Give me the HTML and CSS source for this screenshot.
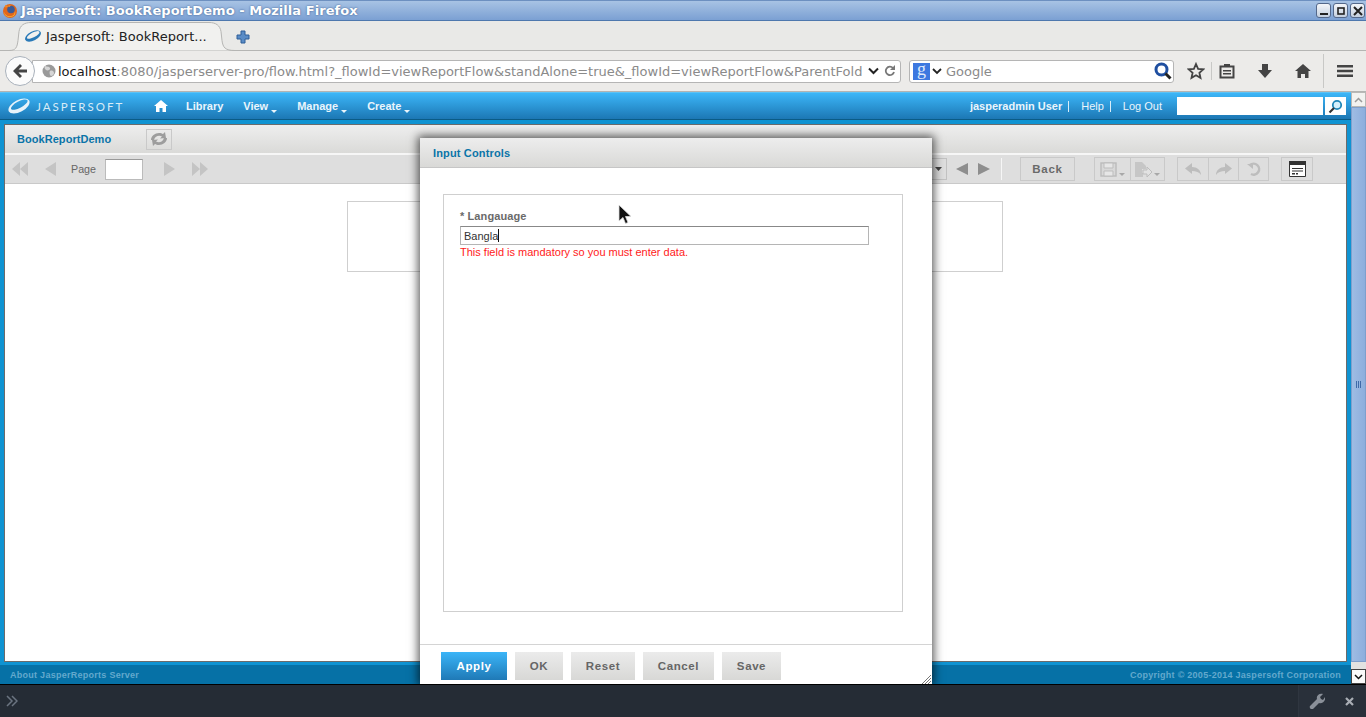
FILE: index.html
```html
<!DOCTYPE html>
<html lang="en">
<head>
  <meta charset="UTF-8" />
  <title>Jaspersoft: BookReportDemo - Mozilla Firefox</title>
  <link rel="stylesheet" href="styles.css">
</head>
<body>
<div class="screen">

  <!-- window title -->
  <div class="titlebar">
    <svg class="ff-icon" width="16" height="16" viewBox="0 0 16 16"><circle cx="8" cy="8" r="7" fill="#e2661a"/><circle cx="9" cy="6.500" r="3.800" fill="#3c5a94"/><path d="M2 9c1 3 4 5 7 4 2 0 4-2 4-5 1 3-1 6-5 6-3 0-6-2-6-5z" fill="#f3b13b"/><path d="M3 2c0 1 0 2 1 3 1-2 3-3 5-3-1 1-1 2-1 2z" fill="#f08a24"/></svg>
    <span class="title-text">Jaspersoft: BookReportDemo - Mozilla Firefox</span>
    <div class="win-btns">
      <span class="win-btn"><svg width="10" height="10" viewBox="0 0 10 10"><rect x="1" y="7" width="8" height="2" fill="#222"/></svg></span>
      <span class="win-btn"><svg width="10" height="10" viewBox="0 0 10 10"><rect x="2" y="2" width="6" height="6" fill="none" stroke="#222" stroke-width="1.6"/></svg></span>
      <span class="win-btn"><svg width="10" height="10" viewBox="0 0 10 10"><path d="M1 1l8 8M9 1l-8 8" stroke="#222" stroke-width="2"/></svg></span>
    </div>
  </div>

  <!-- tabs -->
  <div class="tabstrip">
    <div class="tab">
      <svg class="tab-shape" width="226" height="30" viewBox="0 0 226 30"><path d="M0 29.5c7 0 8-3 9-10l1-9c1-6 5-9 12-9h178c7 0 11 3 12 9l1 9c1 7 3 10 13 10" fill="#f1f1ef" stroke="#b5b5b3"/></svg>
      <svg class="jr-tab" width="18" height="16" viewBox="0 0 26 20"><g transform="rotate(-28 13 10)"><path fill-rule="evenodd" d="M.5 10a12.500 6.500 0 1 0 25 0a12.500 6.500 0 1 0-25 0zM4 8.800a10 3.500 0 1 0 20 0a10 3.500 0 1 0-20 0z" fill="#2a7ab8"/></g></svg>
      <span class="tab-label">Jaspersoft: BookReport...</span>
    </div>
    <svg class="new-tab" width="14" height="14" viewBox="0 0 14 14"><path d="M5 1h4v4h4v4H9v4H5V9H1V5h4z" fill="#5a8cc6" stroke="#2f5f98"/></svg>
  </div>

  <!-- navigation -->
  <div class="navbar">
    <div class="back-btn">
      <svg width="18" height="16" viewBox="0 0 18 16"><path d="M9 1L2 8l7 7 2-2-3.500-3.500H16v-3H7.500L11 3z" fill="#444"/></svg>
    </div>
    <div class="urlbar">
      <svg class="globe" width="14" height="14" viewBox="0 0 14 14"><circle cx="7" cy="7" r="6.500" fill="#9a9a9a"/><path d="M3 2c2 1 4 0 5 2S5 7 4 6 2 4 3 2zm5 5c2-1 4 0 4 2s-2 3-3 3-2-4-1-5z" fill="#d6d6d6"/></svg>
      <span class="url-text"><b>localhost</b>:8080/jasperserver-pro/flow.html?_flowId=viewReportFlow&amp;standAlone=true&amp;_flowId=viewReportFlow&amp;ParentFold</span>
      <svg class="url-chev" width="11" height="8" viewBox="0 0 11 8"><path d="M1 1.500l4.500 4.500L10 1.500" fill="none" stroke="#222" stroke-width="2"/></svg>
      <svg class="url-reload" width="12" height="12" viewBox="0 0 12 12"><path d="M10 7a4.200 4.200 0 1 1-1-4" fill="none" stroke="#777" stroke-width="1.800"/><path d="M11 0v5H6z" fill="#777"/></svg>
    </div>
    <div class="searchbar">
      <span class="g-badge">g</span>
      <svg class="search-chev" width="10" height="7" viewBox="0 0 10 7"><path d="M1 1l4 4 4-4" fill="none" stroke="#222" stroke-width="1.800"/></svg>
      <span class="search-hint">Google</span>
      <svg class="search-go" width="18" height="18" viewBox="0 0 18 18"><circle cx="7.500" cy="7.500" r="5.500" fill="#fff" stroke="#1f4fa0" stroke-width="3"/><path d="M11.500 11.500l5 5" stroke="#222" stroke-width="3"/></svg>
    </div>
    <div class="nav-icons">
      <svg class="nav-star" width="18" height="18" viewBox="0 0 18 18"><path d="M9 2l2.100 4.800 5.200.5-3.900 3.500 1.100 5.100L9 13.300l-4.500 2.600 1.100-5.100-3.900-3.500 5.200-.5z" fill="none" stroke="#444" stroke-width="1.800"/></svg>
      <span class="nav-sep"></span>
      <svg class="nav-clip" width="16" height="16" viewBox="0 0 16 16"><path d="M1.500 3.500h13v11h-13z" fill="none" stroke="#444" stroke-width="2"/><path d="M5 1h6v3H5zM4 7h8v1.500H4zm0 3h8v1.500H4z" fill="#444"/></svg>
      <svg class="nav-down" width="16" height="16" viewBox="0 0 16 16"><path d="M5 1h6v6h4l-7 8-7-8h4z" fill="#444"/></svg>
      <svg class="nav-home" width="18" height="16" viewBox="0 0 18 16"><path d="M9 1L1 8h2.500v7H7v-4h4v4h3.500V8H17z" fill="#444"/></svg>
      <span class="nav-sep nav-sep-tall"></span>
      <svg class="nav-menu" width="18" height="14" viewBox="0 0 18 14"><path d="M1 1h16v2.500H1zm0 4.800h16v2.500H1zm0 4.800h16v2.500H1z" fill="#444"/></svg>
    </div>
  </div>

  <!-- browser content -->
  <div class="viewport">
    <div class="page">

      <div class="js-header">
        <div class="js-logo">
          <svg width="24" height="20" viewBox="0 0 26 20"><g transform="rotate(-28 13 10)"><path fill-rule="evenodd" d="M.5 10a12.500 6.500 0 1 0 25 0a12.500 6.500 0 1 0-25 0zM4 8.800a10 3.500 0 1 0 20 0a10 3.500 0 1 0-20 0z" fill="#e8f3fa"/></g></svg>
          <span class="js-word">JASPERSOFT</span>
        </div>
        <svg class="js-home" width="14" height="12" viewBox="0 0 14 12"><path d="M7 0L0 6h2v6h3.500V8h3v4H12V6h2z" fill="#fff"/></svg>
        <a class="js-link js-library" href="#">Library</a>
        <a class="js-link js-menu" href="#">View</a>
        <a class="js-link js-menu" href="#">Manage</a>
        <a class="js-link js-menu" href="#">Create</a>
        <div class="js-right">
          <span class="js-user">jasperadmin User</span>
          <a class="js-link js-sep" href="#">Help</a>
          <a class="js-link" href="#">Log Out</a>
          <div class="js-search">
            <span class="js-search-box"></span>
            <span class="js-search-btn">
              <svg width="15" height="15" viewBox="0 0 15 15"><circle cx="9" cy="6" r="4.200" fill="#d6f0fb" stroke="#1f86b8" stroke-width="1.800"/><path d="M6 9l-4.500 4.500" stroke="#333" stroke-width="2.200"/></svg>
            </span>
          </div>
        </div>
      </div>

      <div class="work">
        <div class="panel">
          <div class="panel-head">
            <span class="report-name">BookReportDemo</span>
            <span class="sync-btn">
              <svg width="20" height="14" viewBox="0 0 20 14"><path d="M2 8c0-4 4-7 8-7 2 0 3 .5 4 1l2-2 1 6-6 .5 2-2c-3-1.500-7-.5-8 3.500zM18 6c0 4-4 7-8 7-2 0-3-.5-4-1l-2 2-1-6 6-.5-2 2c3 1.500 7 .5 8-3.500z" fill="#9d9d9d"/></svg>
            </span>
          </div>
          <div class="toolbar">
            <svg class="tb-first" width="16" height="14" viewBox="0 0 16 14"><path d="M8 0v14L0 7zm8 0v14L8 7z" fill="#c4c4c4"/></svg>
            <svg class="tb-prev" width="12" height="14" viewBox="0 0 12 14"><path d="M11 0v14L0 7z" fill="#c4c4c4"/></svg>
            <span class="page-label">Page</span>
            <span class="page-input"></span>
            <svg class="tb-next" width="12" height="14" viewBox="0 0 12 14"><path d="M1 0v14l11-7z" fill="#c4c4c4"/></svg>
            <svg class="tb-last" width="16" height="14" viewBox="0 0 16 14"><path d="M0 0v14l8-7zm8 0v14l8-7z" fill="#c4c4c4"/></svg>

            <div class="tb-right">
              <span class="zoom-select"><svg width="7" height="4" viewBox="0 0 7 4"><path d="M0 0h7L3.500 4z" fill="#444"/></svg></span>
              <svg class="tb-search-prev" width="12" height="14" viewBox="0 0 12 14"><path d="M12 1v12L0 7z" fill="#8e8e8e"/></svg>
              <svg class="tb-search-next" width="12" height="14" viewBox="0 0 12 14"><path d="M0 1v12l12-6z" fill="#8e8e8e"/></svg>
              <span class="tb-divider"></span>
              <span class="back-report">Back</span>
              <div class="tb-group tb-group-save">
                <span class="tb-cell tb-cell-save">
                  <svg width="17" height="15" viewBox="0 0 17 15"><path d="M1 1h15v13H1z" fill="#d8d8d8" stroke="#bdbdbd" stroke-width="1.500"/><path d="M4 1h9v5H4zM4 9h9v5H4z" fill="#e6e6e6" stroke="#bdbdbd"/></svg>
                  <i class="caret"></i>
                </span>
                <span class="tb-cell tb-cell-save">
                  <svg width="18" height="17" viewBox="0 0 18 17"><path d="M1 1h7l4 4v3H8v4h1v4H1z" fill="#c6c6c6"/><path d="M9 9h4V6l5 5-5 5v-3H9z" fill="#e2e2e2" stroke="#bdbdbd"/></svg>
                  <i class="caret"></i>
                </span>
              </div>
              <div class="tb-group tb-group-undo">
                <span class="tb-cell"><svg width="18" height="14" viewBox="0 0 18 14"><path d="M8 1L1 6.500 8 12V9c4 0 7 1 9 4 0-5-4-8-9-8z" fill="#bdbdbd"/></svg></span>
                <span class="tb-cell"><svg width="18" height="14" viewBox="0 0 18 14"><path d="M10 1l7 5.500-7 5.500V9c-4 0-7 1-9 4 0-5 4-8 9-8z" fill="#bdbdbd"/></svg></span>
                <span class="tb-cell"><svg width="16" height="16" viewBox="0 0 16 16"><path d="M5 13a5.500 5.500 0 1 0-1-9" fill="none" stroke="#bdbdbd" stroke-width="2.500"/><path d="M1 3h6v5z" fill="#bdbdbd"/></svg></span>
              </div>
              <div class="tb-group tb-group-ic">
                <span class="tb-cell">
                  <svg width="17" height="16" viewBox="0 0 17 16"><path d="M.5.5h16v15H.5z" fill="#fff" stroke="#333"/><path d="M0 0h17v4H0zM3 7h11v1H3zm0 2.500h11v1H3zM3 12h3v1.500H3zm4 0h2v1.500H7z" fill="#333"/></svg>
                </span>
              </div>
            </div>
          </div>
          <div class="report-area">
            <div class="report-sheet"></div>
          </div>
        </div>
      </div>

      <div class="js-footer">
        <span>About JasperReports Server</span>
        <span>Copyright © 2005-2014 Jaspersoft Corporation</span>
      </div>
    </div>

    <div class="scrollbar">
      <span class="sb-arrow"><svg width="9" height="6" viewBox="0 0 9 6"><path d="M1 5l3.500-3.500L8 5" fill="none" stroke="#999" stroke-width="1.500"/></svg></span>
      <span class="sb-thumb"><i class="sb-grip"></i></span>
      <span class="sb-arrow sb-arrow-down"><svg width="9" height="6" viewBox="0 0 9 6"><path d="M1 1l3.500 3.500L8 1" fill="none" stroke="#111" stroke-width="1.500"/></svg></span>
    </div>

    <!-- dialog over the report -->
    <div class="dialog">
      <div class="dialog-head">Input Controls</div>
      <div class="dialog-body">
        <div class="controls-box">
          <label class="field-label">* Langauage</label>
          <div class="field-input"><span>Bangla</span><i class="text-caret"></i></div>
          <div class="field-error">This field is mandatory so you must enter data.</div>
        </div>
      </div>
      <div class="dialog-foot">
        <button class="btn btn-primary">Apply</button>
        <button class="btn btn-ok">OK</button>
        <button class="btn btn-reset">Reset</button>
        <button class="btn btn-cancel">Cancel</button>
        <button class="btn btn-save">Save</button>
      </div>
      <svg class="resize-grip" width="10" height="10" viewBox="0 0 10 10"><path d="M10 1L1 10M10 4l-6 6M10 7l-3 3" stroke="#777" stroke-width="1"/></svg>
    </div>

    <svg class="cursor" width="14" height="22" viewBox="0 0 14 22"><path d="M1 1v16l4-3.500 2.500 6 2.500-1-2.500-6H13z" fill="#111" stroke="#ddd" stroke-width=".8"/></svg>
  </div>

  <!-- dev toolbar -->
  <div class="devbar">
    <svg class="dev-chev" width="12" height="12" viewBox="0 0 12 12"><path d="M1 1l5 5-5 5M6 1l5 5-5 5" fill="none" stroke="#6b7480" stroke-width="1.500"/></svg>
    <div class="dev-tools">
      <svg width="16" height="16" viewBox="0 0 16 16"><path d="M1 13l7-7c-1-3 2-6 6-5l-3 3 1 2 2 1 2-3c1 4-3 7-6 6l-6 6c-2 1-4-1-3-3z" fill="#8a9099"/></svg>
      <svg class="dev-close" width="9" height="9" viewBox="0 0 9 9"><path d="M1 1l7 7M8 1L1 8" stroke="#a9aeb5" stroke-width="2.200"/></svg>
    </div>
  </div>
</div>
</body>
</html>
```

FILE: styles.css
```css
* {
  box-sizing: border-box;
}

html, body {
  margin: 0;
  padding: 0;
  height: 717px;
  overflow: hidden;
}

body {
  font-family: "Liberation Sans", Arial, sans-serif;
}

.screen {
  display: flex;
  flex-direction: column;
  width: 1366px;
  height: 717px;
}

/* window title */
.titlebar {
  display: flex;
  align-items: center;
  height: 21px;
  padding: 0 2px;
  background: linear-gradient(#a8c3e4, #7ba0d3);
  border-top: 1px solid #6d90c0;
  border-bottom: 1px solid #4e78ae;
}

.ff-icon {
  flex: none;
}

.title-text {
  margin-left: 3px;
  font: bold 13px "DejaVu Sans", sans-serif;
  letter-spacing: 0.05px;
  color: #fff;
  text-shadow: 0 0 2px #34568a;
}

.win-btns {
  display: flex;
  gap: 2px;
  margin-left: auto;
  margin-right: -1px;
}

.win-btn {
  display: flex;
  align-items: center;
  justify-content: center;
  width: 15px;
  height: 15px;
  background: linear-gradient(#f4f6f9, #c3cfdf);
  border: 1px solid #54688a;
  border-radius: 3px;
}

/* tabs */
.tabstrip {
  display: flex;
  align-items: flex-end;
  height: 30px;
  background: #e9e9e7;
  border-bottom: 1px solid #b5b5b3;
  padding-left: 9px;
}

.tab {
  position: relative;
  display: flex;
  align-items: center;
  width: 226px;
  height: 30px;
  margin-bottom: -1px;
  padding-left: 15px;
}

.tab-shape {
  position: absolute;
  left: 0;
  top: 0;
}

.jr-tab {
  position: relative;
}

.tab-label {
  position: relative;
  margin-left: 4px;
  font: 13px "DejaVu Sans", sans-serif;
  color: #222;
}

.new-tab {
  margin: 0 0 6px 1px;
}

/* navigation */
.navbar {
  display: flex;
  align-items: center;
  height: 41px;
  padding-left: 5px;
  background: #ecebe9;
  border-bottom: 1px solid #b4b4b2;
}

.back-btn {
  position: relative;
  z-index: 1;
  display: flex;
  align-items: center;
  justify-content: center;
  width: 30px;
  height: 30px;
  background: #fbfbfb;
  border: 1px solid #a9b1bb;
  border-radius: 50%;
}

.urlbar {
  display: flex;
  align-items: center;
  width: 869px;
  height: 23px;
  margin-left: -3px;
  padding: 0 4px 0 9px;
  background: #fff;
  border: 1px solid #b5b5b5;
  border-radius: 0 3px 3px 0;
}

.globe {
  flex: none;
}

.url-text {
  flex: 1;
  margin-left: 2px;
  white-space: nowrap;
  font: 13px "DejaVu Sans", sans-serif;
  color: #8a8a8a;
}

.url-text b {
  font-weight: normal;
  color: #1a1a1a;
}

.url-chev {
  flex: none;
  margin-left: 4px;
}

.url-reload {
  flex: none;
  margin-left: 5px;
}

.searchbar {
  display: flex;
  align-items: center;
  width: 265px;
  height: 23px;
  margin-left: 8px;
  padding: 0 1px 0 3px;
  background: #fff;
  border: 1px solid #b5b5b5;
  border-radius: 3px;
}

.g-badge {
  width: 17px;
  height: 17px;
  background: #3d78e0;
  color: #dfe9fb;
  font: 18px/13px "Liberation Serif", serif;
  text-align: center;
}

.search-chev {
  margin-left: 2px;
}

.search-hint {
  margin-left: 4px;
  font: 13px "DejaVu Sans", sans-serif;
  color: #8a8a8a;
}

.search-go {
  margin-left: auto;
}

.nav-icons {
  display: flex;
  align-items: center;
  flex: 1;
  height: 34px;
}

.nav-star {
  margin-left: 13px;
}

.nav-sep {
  width: 1px;
  height: 18px;
  margin-left: 6px;
  background: #c8c8c6;
}

.nav-sep-tall {
  height: 34px;
  margin-left: 11px;
}

.nav-clip {
  margin-left: 7px;
}

.nav-down {
  margin-left: 22px;
}

.nav-home {
  margin-left: 21px;
}

.nav-menu {
  margin-left: 12px;
}

/* browser content */
.viewport {
  position: relative;
  flex: 1;
  display: flex;
  min-height: 0;
}

.page {
  flex: 1;
  display: flex;
  flex-direction: column;
  min-width: 0;
}

.js-header {
  display: flex;
  align-items: center;
  height: 28px;
  padding-left: 7px;
  background: linear-gradient(#3cb6f8, #1c77b4);
  border-top: 1px solid #5dc2f5;
  border-bottom: 1px solid #0a5b86;
}

.js-logo {
  display: flex;
  align-items: center;
  width: 147px;
}

.js-word {
  margin-left: 5px;
  font: 11.500px "Lato", sans-serif;
  letter-spacing: 2px;
  color: #d8ecf8;
}

.js-link,
.js-user {
  font-size: 11px;
  font-weight: bold;
  color: #eaf5fc;
  text-decoration: none;
}

.js-library {
  margin-left: 18px;
}

.js-menu {
  position: relative;
  margin-left: 20px;
  padding-right: 9px;
}

.js-menu::after {
  content: "";
  position: absolute;
  right: 0;
  bottom: -1px;
  border-left: 3px solid transparent;
  border-right: 3px solid transparent;
  border-top: 3px solid #eaf5fc;
}

.js-right {
  display: flex;
  align-items: center;
  margin-left: auto;
  margin-right: 5px;
}

.js-user {
  padding-right: 6px;
  border-right: 1px solid #d9edf9;
  line-height: 11px;
}

.js-sep {
  margin-left: 12px;
  padding-right: 6px;
  border-right: 1px solid #d9edf9;
  line-height: 11px;
  font-weight: normal;
}

.js-sep + .js-link {
  margin-left: 12px;
  font-weight: normal;
}

.js-search {
  display: flex;
  margin-left: 15px;
}

.js-search-box {
  width: 146px;
  height: 18px;
  background: #fff;
}

.js-search-btn {
  display: flex;
  align-items: center;
  justify-content: center;
  width: 21px;
  height: 18px;
  margin-left: 2px;
  background: #fff;
}

.work {
  flex: 1;
  display: flex;
  padding: 4px 4px 3px;
  background: #0f93d2;
  min-height: 0;
}

.panel {
  flex: 1;
  display: flex;
  flex-direction: column;
  background: #fff;
  border: 1px solid #6b6b6b;
}

.panel-head {
  display: flex;
  align-items: center;
  height: 30px;
  padding-left: 12px;
  background: linear-gradient(#eeeeee, #dadad8);
  border-bottom: 2px solid #f6f6f6;
}

.report-name {
  font-size: 11px;
  font-weight: bold;
  letter-spacing: 0.050px;
  color: #0a74a8;
}

.sync-btn {
  display: flex;
  align-items: center;
  justify-content: center;
  width: 26px;
  height: 21px;
  margin-left: 35px;
  border: 1px solid #c9c9c9;
}

.toolbar {
  display: flex;
  align-items: center;
  height: 29px;
  background: #dedede;
  border-bottom: 1px solid #c9c9c9;
  padding-left: 7px;
}

.tb-prev {
  margin-left: 17px;
}

.page-label {
  margin-left: 14px;
  font-size: 10.700px;
  color: #666;
}

.page-input {
  width: 38px;
  height: 21px;
  margin-left: 9px;
  background: #fff;
  border: 1px solid #bbb;
  border-top-color: #999;
}

.tb-next {
  margin-left: 20px;
}

.tb-last {
  margin-left: 17px;
}

.tb-right {
  display: flex;
  align-items: center;
  margin-left: auto;
  margin-right: 33px;
}

.zoom-select {
  display: flex;
  align-items: center;
  justify-content: flex-end;
  width: 30px;
  height: 22px;
  padding-right: 4px;
  border: 1px solid #c2c2c2;
}

.tb-search-prev {
  margin-left: 9px;
}

.tb-search-next {
  margin-left: 10px;
}

.tb-divider {
  width: 1px;
  height: 22px;
  margin-left: 11px;
  background: #f6f6f6;
}

.back-report {
  width: 55px;
  height: 24px;
  margin-left: 18px;
  border: 1px solid #c9c9c9;
  font-size: 11.500px;
  font-weight: bold;
  letter-spacing: 0.700px;
  line-height: 22px;
  text-align: center;
  color: #6a6a6a;
}

.tb-group {
  display: flex;
  height: 24px;
  border: 1px solid #c9c9c9;
}

.tb-group-save {
  margin-left: 19px;
}

.tb-group-undo {
  margin-left: 12px;
}

.tb-group-ic {
  margin-left: 12px;
}

.tb-cell {
  display: flex;
  align-items: center;
  justify-content: center;
  width: 30px;
  height: 22px;
  border-left: 1px solid #c9c9c9;
}

.tb-cell:first-child {
  border-left: none;
}

.tb-cell-save {
  width: 34.500px;
  gap: 2px;
}

.caret {
  align-self: flex-end;
  margin-bottom: 4px;
  border-left: 3px solid transparent;
  border-right: 3px solid transparent;
  border-top: 3px solid #a8a8a8;
}

.report-area {
  flex: 1;
  padding: 17px 0 0 342px;
}

.report-sheet {
  width: 656px;
  height: 71px;
  border: 1px solid #cfcfcf;
}

.js-footer {
  display: flex;
  justify-content: space-between;
  align-items: center;
  height: 19px;
  padding: 0 10px;
  background: #0671a6;
  font-size: 9px;
  font-weight: bold;
  letter-spacing: 0.270px;
  color: #63a9cd;
}

.scrollbar {
  display: flex;
  flex-direction: column;
  width: 15px;
  background: #e3e3e1;
}

.sb-arrow {
  display: flex;
  align-items: center;
  justify-content: center;
  height: 15px;
  background: #f2f2f0;
  border: 1px solid #b8b8b6;
}

.sb-arrow-down {
  background: #fafafa;
  border-color: #444;
}

.sb-thumb {
  display: flex;
  align-items: center;
  justify-content: center;
  height: 555px;
  margin-bottom: auto;
  background: linear-gradient(90deg, #9fbce3, #8daedd);
  border: 1px solid #7f9fcc;
}

.sb-grip {
  width: 5px;
  height: 7px;
  background: repeating-linear-gradient(90deg, #3f6aa8 0, #3f6aa8 1px, transparent 1px, transparent 2px);
}

/* dialog over the report */
.dialog {
  position: absolute;
  left: 420px;
  top: 46px;
  width: 512px;
  bottom: 0;
  display: flex;
  flex-direction: column;
  background: #fff;
  box-shadow: 0 0 9px 2px rgba(0, 0, 0, 0.65);
}

.dialog-head {
  height: 30px;
  padding-left: 13px;
  background: linear-gradient(#ededed, #d9d9d7);
  border-bottom: 1px solid #c6c6c6;
  font-size: 11px;
  font-weight: bold;
  letter-spacing: 0.150px;
  line-height: 30px;
  color: #0a74a8;
}

.dialog-body {
  flex: 1;
  padding: 26px 29px 32px 23px;
  border-bottom: 1px solid #d4d4d4;
}

.controls-box {
  height: 100%;
  padding: 15px 16px;
  border: 1px solid #cfcfcf;
}

.field-label {
  display: block;
  font-size: 11px;
  font-weight: bold;
  letter-spacing: 0.100px;
  color: #6a6a6a;
}

.field-input {
  display: flex;
  align-items: center;
  width: 409px;
  height: 19px;
  margin-top: 4px;
  padding-left: 3px;
  border: 1px solid #b5b5b5;
  border-top-color: #888;
  font-size: 11px;
  color: #333;
}

.text-caret {
  width: 1px;
  height: 13px;
  background: #111;
}

.field-error {
  margin-top: 1px;
  font-size: 11px;
  color: #ff1a1a;
}

.dialog-foot {
  display: flex;
  gap: 8px;
  height: 39px;
  padding: 7px 0 0 21px;
}

.btn {
  height: 28px;
  padding: 0;
  border: none;
  background: linear-gradient(#ebebeb, #d8d8d6);
  font: bold 11.500px "Liberation Sans", sans-serif;
  letter-spacing: 0.600px;
  color: #666;
}

.btn-primary {
  width: 66px;
  background: linear-gradient(#3bb5f8, #1f79b6);
  color: #fff;
}

.btn-ok {
  width: 48px;
}

.btn-reset {
  width: 64px;
}

.btn-cancel {
  width: 71px;
}

.btn-save {
  width: 59px;
}

.resize-grip {
  position: absolute;
  right: 1px;
  bottom: 0;
}

.cursor {
  position: absolute;
  left: 618px;
  top: 112px;
}

/* dev toolbar */
.devbar {
  position: relative;
  z-index: 1;
  display: flex;
  align-items: center;
  height: 33px;
  padding-left: 6px;
  background: #252c35;
  border-top: 1px solid #000;
}

.dev-tools {
  display: flex;
  align-items: center;
  gap: 20px;
  height: 100%;
  margin-left: auto;
  padding: 0 12px 0 10px;
  width: 68px;
  background: #29303a;
  border-left: 1px solid #2f3640;
}
```
